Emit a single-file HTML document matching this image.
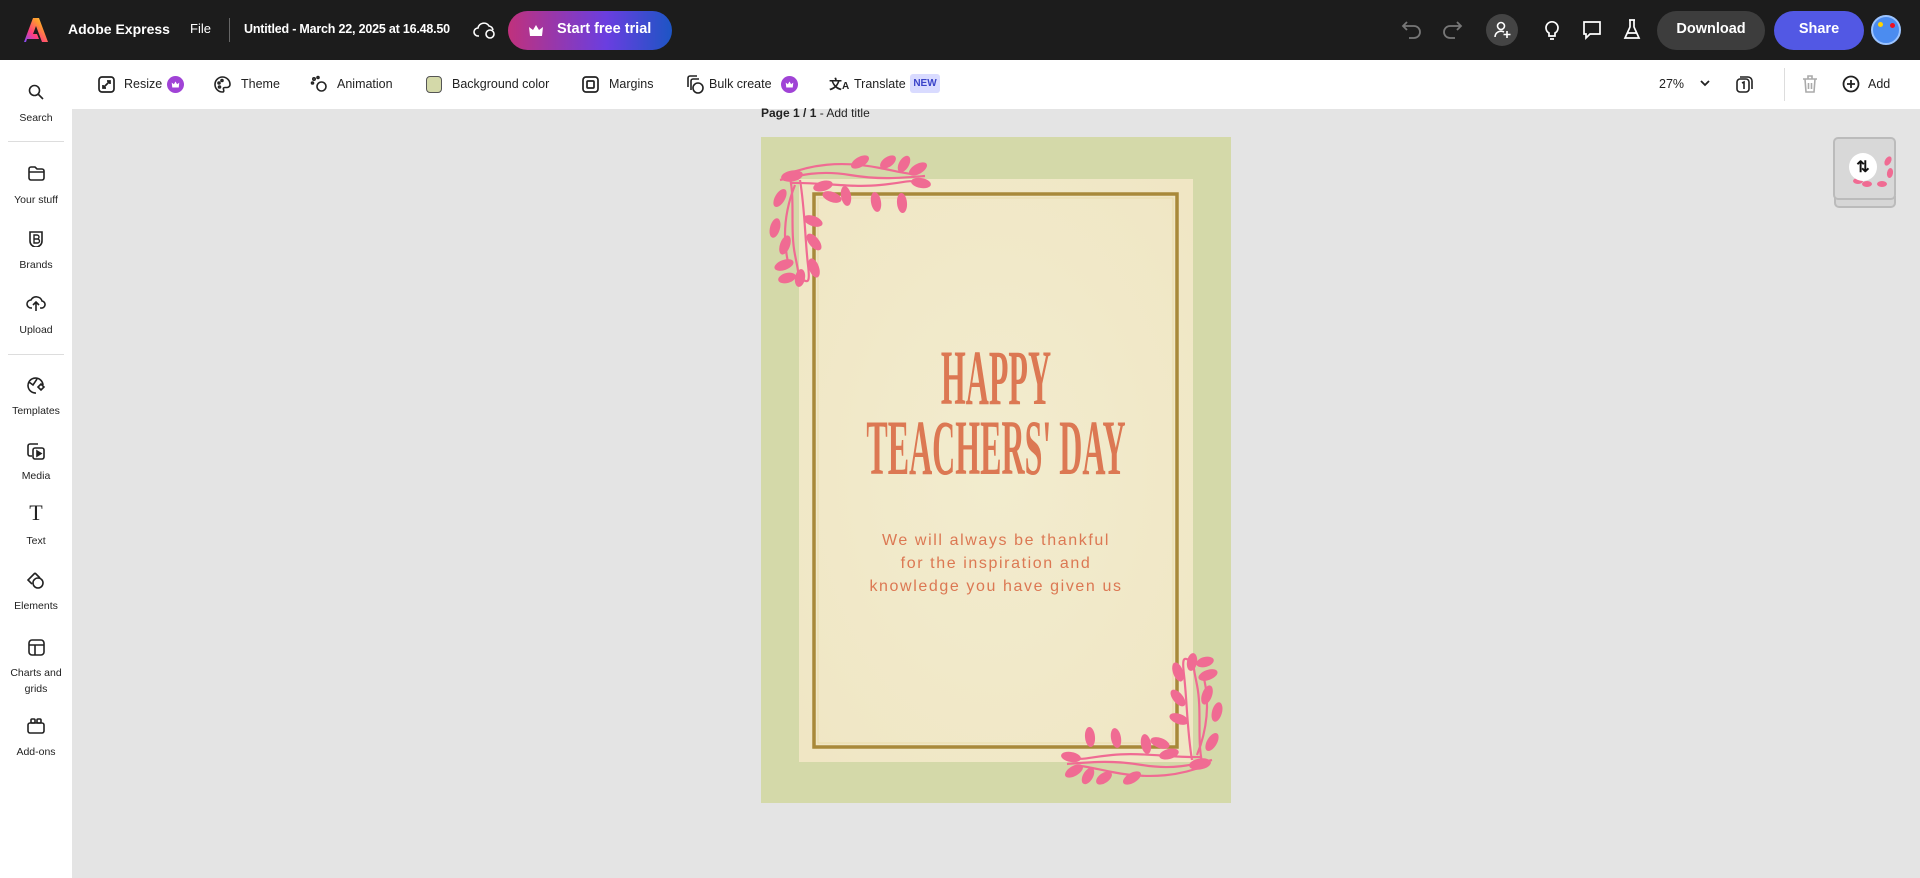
<!DOCTYPE html>
<html><head><meta charset="utf-8"><style>
*{margin:0;padding:0;box-sizing:border-box}
body{width:1920px;height:878px;overflow:hidden;background:#e4e4e4;font-family:"Liberation Sans",sans-serif;position:relative}
.top{position:absolute;left:0;top:0;width:1920px;height:60px;background:#1c1c1c;color:#fff}
.a{position:absolute;white-space:nowrap}
.tb{position:absolute;left:72px;top:60px;width:1848px;height:49px;background:#fff;font-size:12.5px;color:#222}
.side{position:absolute;left:0;top:60px;width:72px;height:818px;background:#fff}
.si{position:absolute;left:0;width:72px;text-align:center;font-size:10.5px;color:#222}
svg{display:block}
.ic{position:absolute}
</style></head><body>
<div class="top">
  <svg class="ic" style="left:24px;top:17px" width="24" height="26" viewBox="0 0 24 26"><defs><linearGradient id="lg" x1="0" y1="1" x2="1" y2="0"><stop offset="0" stop-color="#7c4dff"/><stop offset=".35" stop-color="#ff3d7f"/><stop offset=".7" stop-color="#ff9a2e"/><stop offset="1" stop-color="#ffd84a"/></linearGradient></defs><path d="M9 1h6l9 24h-6l-6-16-3 8h4l2 5H3l-1 3H0z" fill="url(#lg)"/></svg>
  <div class="a" style="left:68px;top:21px;font-size:14px;font-weight:bold">Adobe Express</div>
  <div class="a" style="left:190px;top:21px;font-size:13px">File</div>
  <div class="a" style="left:229px;top:18px;width:1px;height:24px;background:#666"></div>
  <div class="a" style="left:244px;top:22px;font-size:12.5px;font-weight:bold;letter-spacing:-0.2px">Untitled - March 22, 2025 at 16.48.50</div>
  <svg class="ic" style="left:473px;top:20px" width="24" height="20" viewBox="0 0 24 20" fill="none" stroke="#fff" stroke-width="1.6"><path d="M6 16H5a4 4 0 0 1 0-8 6 6 0 0 1 11-2 5 5 0 0 1 4 4"/><circle cx="17" cy="14" r="4"/></svg>
  <div class="a" style="left:508px;top:11px;width:164px;height:39px;border-radius:20px;background:linear-gradient(90deg,#c0317c,#6a3ee0 60%,#1d55c4)"></div>
  <svg class="ic" style="left:528px;top:24px" width="16" height="13" viewBox="0 0 16 13"><path d="M1 3l4 3 3-5 3 5 4-3-1 9H2z" fill="#fff"/></svg>
  <div class="a" style="left:557px;top:21px;font-size:14.5px;font-weight:bold">Start free trial</div>
  <svg class="ic" style="left:1401px;top:20px" width="22" height="20" viewBox="0 0 22 20" fill="none" stroke="#777" stroke-width="1.8"><path d="M6 2L2 6l4 4M2 6h11a6 6 0 0 1 0 12H8"/></svg>
  <svg class="ic" style="left:1441px;top:20px" width="22" height="20" viewBox="0 0 22 20" fill="none" stroke="#777" stroke-width="1.8"><path d="M16 2l4 4-4 4M20 6H9a6 6 0 0 0 0 12h5"/></svg>
  <div class="a" style="left:1486px;top:14px;width:32px;height:32px;border-radius:50%;background:#444"></div>
  <svg class="ic" style="left:1493px;top:20px" width="20" height="20" viewBox="0 0 20 20" fill="none" stroke="#fff" stroke-width="1.6"><circle cx="8" cy="6" r="3.5"/><path d="M2 17a6 6 0 0 1 9-5M14 11v7M10.5 14.5h7"/></svg>
  <svg class="ic" style="left:1542px;top:19px" width="20" height="22" viewBox="0 0 20 22" fill="none" stroke="#fff" stroke-width="1.7"><path d="M7 17v-3a6 6 0 1 1 6 0v3zM8 20h4"/></svg>
  <svg class="ic" style="left:1581px;top:19px" width="22" height="22" viewBox="0 0 22 22" fill="none" stroke="#fff" stroke-width="1.7"><path d="M3 3h16v12H9l-4 4v-4H3z"/></svg>
  <svg class="ic" style="left:1622px;top:18px" width="20" height="24" viewBox="0 0 20 24" fill="none" stroke="#fff" stroke-width="1.7"><path d="M7 2h6M8 2v7L3 20h14L12 9V2M5 15h10"/></svg>
  <div class="a" style="left:1657px;top:11px;width:108px;height:39px;border-radius:20px;background:#3d3d3d"></div>
  <div class="a" style="left:1657px;top:21px;width:108px;text-align:center;font-size:14.5px;font-weight:bold">Download</div>
  <div class="a" style="left:1774px;top:11px;width:90px;height:39px;border-radius:20px;background:#5258e4"></div>
  <div class="a" style="left:1774px;top:21px;width:90px;text-align:center;font-size:14.5px;font-weight:bold">Share</div>
  <div class="a" style="left:1871px;top:15px;width:30px;height:30px;border-radius:50%;background:#4b8cf0;border:2px solid #9cc4ff"></div>
  <div class="a" style="left:1878px;top:22px;width:5px;height:5px;border-radius:50%;background:#ffd400"></div>
  <div class="a" style="left:1890px;top:23px;width:5px;height:5px;border-radius:50%;background:#e12"></div>
</div>

<div class="tb">
  <svg class="ic" style="left:26px;top:16px" width="17" height="17" viewBox="0 0 17 17" fill="none" stroke="#222" stroke-width="1.7"><rect x="1" y="1" width="15" height="15" rx="3"/><path d="M9 5h3v3M12 5L6 11M5 9v3h3"/></svg>
  <div class="a" style="left:52px;top:17px">Resize</div>
  <div class="a" style="left:95px;top:16px;width:17px;height:17px;border-radius:50%;background:#a043d6"></div>
  <svg class="ic" style="left:99px;top:21px" width="9" height="7" viewBox="0 0 16 13"><path d="M1 3l4 3 3-5 3 5 4-3-1 9H2z" fill="#fff"/></svg>
  <svg class="ic" style="left:142px;top:16px" width="17" height="17" viewBox="0 0 17 17" fill="none" stroke="#222" stroke-width="1.6"><path d="M8.5 1a7.5 7.5 0 0 0 0 15c1.5 0 1.5-1.5 1-2.5s0-2 1.5-2H13a3 3 0 0 0 3-3A7.5 7.5 0 0 0 8.5 1z"/><circle cx="5" cy="7" r="1"/><circle cx="8" cy="4.5" r="1"/><circle cx="5.5" cy="11" r="1"/></svg>
  <div class="a" style="left:169px;top:17px">Theme</div>
  <svg class="ic" style="left:238px;top:15px" width="18" height="18" viewBox="0 0 18 18" fill="none" stroke="#222" stroke-width="1.6"><circle cx="11.5" cy="11.5" r="4.5"/><circle cx="4" cy="4" r="1.2"/><circle cx="2.5" cy="8" r="1"/><circle cx="8" cy="2.5" r="1"/></svg>
  <div class="a" style="left:265px;top:17px">Animation</div>
  <div class="a" style="left:354px;top:16px;width:16px;height:17px;border-radius:4px;background:#d4d9a9;border:1.5px solid #555"></div>
  <div class="a" style="left:380px;top:17px">Background color</div>
  <svg class="ic" style="left:510px;top:16px" width="17" height="17" viewBox="0 0 17 17" fill="none" stroke="#222" stroke-width="1.7"><rect x="1" y="1" width="15" height="15" rx="3"/><rect x="5" y="5" width="7" height="7" rx="1"/></svg>
  <div class="a" style="left:537px;top:17px">Margins</div>
  <svg class="ic" style="left:614px;top:15px" width="18" height="19" viewBox="0 0 18 19" fill="none" stroke="#222" stroke-width="1.6"><path d="M2 12V3a2 2 0 0 1 2-2h7M5 15V6a2 2 0 0 1 2-2h6"/><circle cx="12" cy="13" r="5"/></svg>
  <div class="a" style="left:637px;top:17px">Bulk create</div>
  <div class="a" style="left:709px;top:16px;width:17px;height:17px;border-radius:50%;background:#a043d6"></div>
  <svg class="ic" style="left:713px;top:21px" width="9" height="7" viewBox="0 0 16 13"><path d="M1 3l4 3 3-5 3 5 4-3-1 9H2z" fill="#fff"/></svg>
  <div class="a" style="left:757px;top:14px;font-size:13px;font-family:'Liberation Sans','Noto Sans CJK SC',sans-serif;font-weight:bold">文<span style="font-size:10px">A</span></div>
  <div class="a" style="left:782px;top:17px">Translate</div>
  <div class="a" style="left:838px;top:14px;width:30px;height:19px;border-radius:3px;background:#d9dbff;color:#3b44c9;font-size:10px;font-weight:bold;text-align:center;line-height:19px">NEW</div>
  <div class="a" style="left:1587px;top:17px;font-size:12.5px">27%</div>
  <svg class="ic" style="left:1628px;top:20px" width="10" height="7" viewBox="0 0 10 7" fill="none" stroke="#222" stroke-width="1.8"><path d="M1 1l4 4 4-4"/></svg>
  <svg class="ic" style="left:1664px;top:15px" width="17" height="18" viewBox="0 0 17 18" fill="none" stroke="#222" stroke-width="1.6"><rect x="1" y="4" width="12" height="13" rx="3"/><path d="M4 2h8a4 4 0 0 1 4 4v8"/><path d="M6 8l2-1v7"/></svg>
  <div class="a" style="left:1712px;top:8px;width:1px;height:33px;background:#ddd"></div>
  <svg class="ic" style="left:1730px;top:15px" width="16" height="18" viewBox="0 0 16 18" fill="none" stroke="#aaa" stroke-width="1.6"><path d="M1 4h14M6 4V1h4v3M3 4l1 13h8l1-13M6.5 8v6M9.5 8v6"/></svg>
  <svg class="ic" style="left:1770px;top:15px" width="18" height="18" viewBox="0 0 18 18" fill="none" stroke="#222" stroke-width="1.8"><circle cx="9" cy="9" r="7.5"/><path d="M9 5v8M5 9h8"/></svg>
  <div class="a" style="left:1796px;top:17px;font-size:12.5px">Add</div>
</div>

<div class="side">
  <svg class="ic" style="left:28px;top:24px" width="16" height="16" viewBox="0 0 16 16" fill="none" stroke="#222" stroke-width="1.6"><circle cx="6.5" cy="6.5" r="5"/><path d="M10 10l5 5"/></svg>
  <div class="si" style="top:52px">Search</div>
  <div class="a" style="left:8px;top:81px;width:56px;height:1px;background:#ddd"></div>
  <svg class="ic" style="left:28px;top:106px" width="17" height="15" viewBox="0 0 17 15" fill="none" stroke="#222" stroke-width="1.6"><path d="M1 3a2 2 0 0 1 2-2h4l2 2h5a2 2 0 0 1 2 2v7a2 2 0 0 1-2 2H3a2 2 0 0 1-2-2zM1 6h15"/></svg>
  <div class="si" style="top:134px">Your stuff</div>
  <svg class="ic" style="left:28px;top:170px" width="16" height="17" viewBox="0 0 16 17" fill="none" stroke="#222" stroke-width="1.6"><path d="M2 2h12v9a6 6 0 0 1-12 0z"/><path d="M6 5h3a2 2 0 0 1 0 4H6zM6 9h3.5a2 2 0 0 1 0 4H6z" stroke-width="1.4"/></svg>
  <div class="si" style="top:199px">Brands</div>
  <svg class="ic" style="left:26px;top:235px" width="20" height="17" viewBox="0 0 20 17" fill="none" stroke="#222" stroke-width="1.6"><path d="M6 13H5a4 4 0 0 1 0-8 6 6 0 0 1 11 1 3.5 3.5 0 0 1-1 7h-1M10 16V8M7 10l3-3 3 3"/></svg>
  <div class="si" style="top:264px">Upload</div>
  <div class="a" style="left:8px;top:294px;width:56px;height:1px;background:#ddd"></div>
  <svg class="ic" style="left:27px;top:317px" width="18" height="17" viewBox="0 0 18 17" fill="none" stroke="#222" stroke-width="1.6"><path d="M9 16A7.5 7.5 0 1 1 16 8M2 5l4 3 4-6M11 10l3 3 3-3-3-3z"/></svg>
  <div class="si" style="top:345px">Templates</div>
  <svg class="ic" style="left:27px;top:382px" width="18" height="18" viewBox="0 0 18 18" fill="none" stroke="#222" stroke-width="1.6"><path d="M5 14H3a2 2 0 0 1-2-2V4a2 2 0 0 1 2-2h8"/><rect x="6" y="6" width="11" height="11" rx="2"/><path d="M10 9l4 2.5-4 2.5z" fill="#222"/></svg>
  <div class="si" style="top:410px">Media</div>
  <div class="si" style="top:440px;font-family:'Liberation Serif',serif;font-size:22px">T</div>
  <div class="si" style="top:475px">Text</div>
  <svg class="ic" style="left:27px;top:512px" width="18" height="17" viewBox="0 0 18 17" fill="none" stroke="#222" stroke-width="1.6"><path d="M8 1L1 8l4 4M8 1l5 5"/><circle cx="11" cy="11" r="5"/></svg>
  <div class="si" style="top:540px">Elements</div>
  <svg class="ic" style="left:28px;top:579px" width="17" height="17" viewBox="0 0 17 17" fill="none" stroke="#222" stroke-width="1.6"><rect x="1" y="1" width="15" height="15" rx="3"/><path d="M1 6h15M7 6v10"/></svg>
  <div class="si" style="top:605px;line-height:16px;white-space:normal">Charts and<br>grids</div>
  <svg class="ic" style="left:27px;top:658px" width="18" height="16" viewBox="0 0 18 16" fill="none" stroke="#222" stroke-width="1.6"><rect x="1" y="5" width="16" height="10" rx="2"/><rect x="4" y="1" width="4" height="4" rx="1"/><rect x="10" y="1" width="4" height="4" rx="1"/></svg>
  <div class="si" style="top:686px">Add-ons</div>
</div>

<div class="a" style="left:761px;top:106px;font-size:12px;color:#222"><b>Page 1 / 1</b> - Add title</div>

<svg class="ic" style="left:761px;top:137px" width="470" height="666" viewBox="761 137 470 666">
  <defs>
    <radialGradient id="cr" cx=".5" cy=".5" r=".7"><stop offset="0" stop-color="#f2ecce"/><stop offset="1" stop-color="#f0e6c4"/></radialGradient>
    <g id="leaves" fill="#f06b93" stroke="#f06b93">
      <g fill="none" stroke-width="2.2">
        <path d="M780 180 C800 175 820 170 850 175 S900 178 925 176"/>
        <path d="M785 175 C810 165 840 160 880 168 S910 175 920 170"/>
        <path d="M790 183 C820 182 850 188 880 185 S905 180 918 182"/>
        <path d="M790 178 C795 200 790 230 795 255 S800 275 790 280"/>
        <path d="M800 180 C805 210 805 240 808 265 S805 278 800 280"/>
        <path d="M795 185 C785 210 782 235 788 262"/>
      </g>
      <g stroke="none">
        <ellipse cx="792" cy="176" rx="11" ry="5.5" transform="rotate(-10 792 176)"/>
        <ellipse cx="823" cy="186" rx="10" ry="5" transform="rotate(-15 823 186)"/>
        <ellipse cx="832" cy="197" rx="10" ry="5" transform="rotate(20 832 197)"/>
        <ellipse cx="846" cy="196" rx="10" ry="5" transform="rotate(80 846 196)"/>
        <ellipse cx="860" cy="162" rx="10" ry="5" transform="rotate(-30 860 162)"/>
        <ellipse cx="876" cy="202" rx="10" ry="5" transform="rotate(80 876 202)"/>
        <ellipse cx="888" cy="162" rx="9" ry="5" transform="rotate(-35 888 162)"/>
        <ellipse cx="904" cy="164" rx="9" ry="5" transform="rotate(-60 904 164)"/>
        <ellipse cx="902" cy="203" rx="10" ry="5" transform="rotate(85 902 203)"/>
        <ellipse cx="918" cy="169" rx="10" ry="5" transform="rotate(-30 918 169)"/>
        <ellipse cx="921" cy="183" rx="10" ry="5" transform="rotate(10 921 183)"/>
        <ellipse cx="780" cy="198" rx="10" ry="5" transform="rotate(-60 780 198)"/>
        <ellipse cx="775" cy="228" rx="10" ry="5" transform="rotate(-75 775 228)"/>
        <ellipse cx="813" cy="221" rx="10" ry="5" transform="rotate(20 813 221)"/>
        <ellipse cx="785" cy="245" rx="10" ry="5" transform="rotate(-70 785 245)"/>
        <ellipse cx="814" cy="242" rx="10" ry="5" transform="rotate(50 814 242)"/>
        <ellipse cx="784" cy="265" rx="10" ry="5" transform="rotate(-20 784 265)"/>
        <ellipse cx="814" cy="268" rx="10" ry="5" transform="rotate(70 814 268)"/>
        <ellipse cx="787" cy="278" rx="9" ry="5" transform="rotate(-15 787 278)"/>
        <ellipse cx="800" cy="278" rx="9" ry="5" transform="rotate(-80 800 278)"/>
      </g>
    </g>
  </defs>
  <rect x="761" y="137" width="470" height="666" fill="#d4d9a9"/>
  <rect x="799" y="179" width="394" height="583" fill="url(#cr)"/>
  <rect x="814" y="194" width="363" height="553" fill="none" stroke="#a8893a" stroke-width="3.5"/>
  <rect x="818" y="198" width="355" height="545" fill="none" stroke="#e9dba8" stroke-width="1"/>
  <use href="#leaves"/>
  <use href="#leaves" transform="rotate(180 996 470)"/>
</svg>

<div class="a" style="left:596px;top:343px;width:800px;text-align:center;color:#dc7853;font-family:'Liberation Serif',serif;font-weight:bold;font-size:78px;line-height:70px;transform:scaleX(.41);transform-origin:center top">HAPPY<br>TEACHERS' DAY</div>
<div class="a" style="left:796px;top:529px;width:400px;text-align:center;color:#dc7853;font-size:16px;line-height:23px;letter-spacing:1.6px">We will always be thankful<br>for the inspiration and<br>knowledge you have given us</div>

<div class="a" style="left:1834px;top:196px;width:62px;height:12px;border:2px solid #bbb;border-top:none;border-radius:0 0 5px 5px;background:#d6d6d6"></div>
<div class="a" style="left:1833px;top:137px;width:63px;height:63px;border:2px solid #bbb;border-radius:5px;background:#d8d8d8"></div>
<svg class="ic" style="left:1852px;top:151px" width="42" height="40" viewBox="0 0 42 40" fill="#f06b93"><ellipse cx="36" cy="10" rx="5" ry="3" transform="rotate(-60 36 10)"/><ellipse cx="38" cy="22" rx="5" ry="3" transform="rotate(-80 38 22)"/><ellipse cx="30" cy="33" rx="5" ry="3"/><ellipse cx="15" cy="33" rx="5" ry="3"/><ellipse cx="6" cy="30" rx="5" ry="3"/></svg>
<div class="a" style="left:1849px;top:153px;width:28px;height:28px;border-radius:50%;background:#fff"></div>
<div class="a" style="left:1852px;top:157px;width:22px;text-align:center;font-size:16px;font-weight:bold;color:#111">⇅</div>
</body></html>
